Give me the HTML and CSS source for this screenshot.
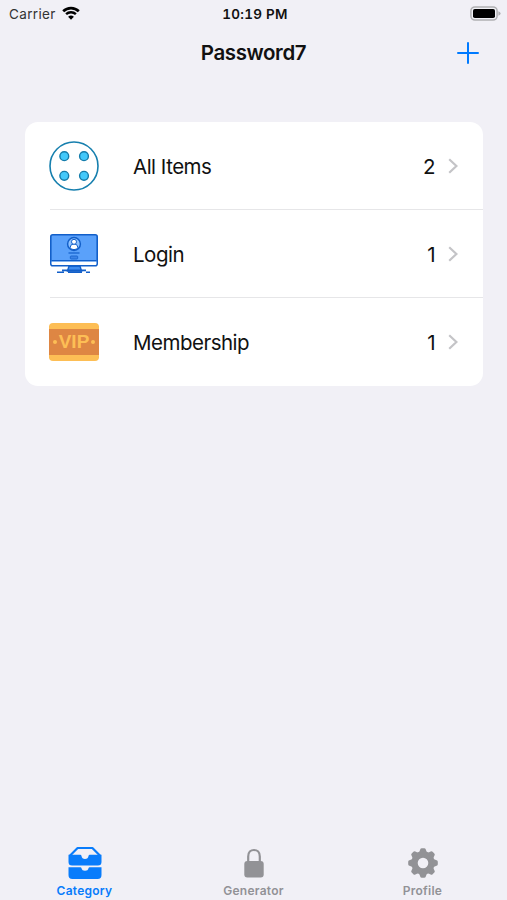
FILE: index.html
```html
<!DOCTYPE html>
<html lang="en">
<head>
    <meta charset="UTF-8">
    <meta name="viewport" content="width=device-width, initial-scale=1.0">
    <title>Password7</title>
    <link rel="stylesheet" href="styles.css">
</head>
<body>
    <div class="app">
        <div class="status-bar">
            <div class="carrier">
                <span>Carrier</span>
                <svg class="wifi" viewBox="0 0 18 14">
                    <path d="M1.2 5.2a11.2 11.2 0 0 1 15.6 0" fill="none" stroke="#000" stroke-width="2.7"/>
                    <path d="M4.1 8.2a7 7 0 0 1 9.8 0" fill="none" stroke="#000" stroke-width="2.4"/>
                    <path d="M6.1 10.8a4.2 4.2 0 0 1 5.8 0L9 13.7z"/>
                </svg>
            </div>
            <span class="time">10:19 PM</span>
            <svg class="battery" viewBox="0 0 31 15">
                <rect x="0.9" y="0.9" width="26.2" height="13.2" rx="4" fill="#f1f1f6" stroke="#b0b0b3" stroke-width="1.5"/>
                <rect x="3" y="3" width="22" height="9" rx="1.8"/>
                <path d="M28.4 5.2q2.2.8 2.2 2.3t-2.2 2.3z" fill="#b0b0b3"/>
            </svg>
        </div>

        <header class="navbar">
            <h1>Password7</h1>
            <button class="add" aria-label="Add">
                <svg viewBox="0 0 22 22"><path d="M11 1v20M1 11h20" stroke="#007aff" stroke-width="2" stroke-linecap="round"/></svg>
            </button>
        </header>

        <main class="list">
            <div class="row">
                <svg class="row-icon" viewBox="0 0 50 50">
                    <circle cx="25" cy="25" r="24" fill="#fff" stroke="#167fae" stroke-width="1.6"/>
                    <g fill="#43c8fa" stroke="#147cab" stroke-width="1.4">
                        <circle cx="15.3" cy="15.2" r="4.4"/>
                        <circle cx="35" cy="15.2" r="4.4"/>
                        <circle cx="15.3" cy="34.8" r="4.4"/>
                        <circle cx="35" cy="34.8" r="4.4"/>
                    </g>
                </svg>
                <div class="row-body">
                    <span class="name">All Items</span>
                    <span class="count">2</span>
                    <svg class="chevron" viewBox="0 0 10 16"><path d="M1.2 1.2 8.4 8l-7.2 6.8"/></svg>
                </div>
            </div>
            <div class="row">
                <svg class="row-icon" viewBox="0 0 50 50">
                    <path d="M20 37h11l1.5 5h-14z" fill="#408df0" stroke="#125fc9" stroke-width="1.4"/>
                    <rect x="1.8" y="5.8" width="46.4" height="31" rx="2" fill="#5aa1fa" stroke="#125fc9" stroke-width="1.6"/>
                    <path d="M2.6 32.4h44.8V35q0 1-1 1H3.6q-1 0-1-1z" fill="#fff"/>
                    <path d="M2.6 31.6h44.8" stroke="#125fc9" stroke-width="1.4"/>
                    <circle cx="25" cy="15" r="6.4" fill="#8fc2ff" stroke="#125fc9" stroke-width="1.5"/>
                    <path d="M21 18.8q.4-4 4-4t4 4q-1.6 1.8-4 1.8t-4-1.8z" fill="#fff" stroke="#125fc9"/>
                    <circle cx="25" cy="12.8" r="2.5" fill="#fff" stroke="#125fc9"/>
                    <path d="M19.5 24h11" stroke="#1c68d0" stroke-width="1.4"/>
                    <rect x="21.3" y="27" width="7.4" height="3" rx=".8" fill="#3b83e6" stroke="#1c68d0"/>
                    <path d="M13 41.4h24M8 43.2h7M19 43.2h14M37 43.2h4" stroke="#125fc9" stroke-width="1.6"/>
                </svg>
                <div class="row-body">
                    <span class="name">Login</span>
                    <span class="count">1</span>
                    <svg class="chevron" viewBox="0 0 10 16"><path d="M1.2 1.2 8.4 8l-7.2 6.8"/></svg>
                </div>
            </div>
            <div class="row">
                <div class="row-icon vip">
                    <i></i><b>VIP</b><i></i>
                </div>
                <div class="row-body">
                    <span class="name">Membership</span>
                    <span class="count">1</span>
                    <svg class="chevron" viewBox="0 0 10 16"><path d="M1.2 1.2 8.4 8l-7.2 6.8"/></svg>
                </div>
            </div>
        </main>

        <nav class="tabbar">
            <a class="tab active">
                <svg viewBox="0 0 36 36">
                    <path d="M2.6 12 10.6 4h14.8l8 8" fill="none" stroke="currentColor" stroke-width="2.2" stroke-linejoin="round"/>
                    <path d="M1.5 10.8h11.7q1.1 0 1.3 1.2.4 3 3.5 3t3.5-3q.2-1.2 1.3-1.2h11.7V18q0 3.6-3.6 3.6H5.1q-3.6 0-3.6-3.6z"/>
                    <path d="M1.5 23.2h11.8q1 0 1.2 1.1.5 2.5 3.5 2.5t3.5-2.5q.2-1.1 1.2-1.1h11.8V31q0 4-3.9 4H5.4q-3.9 0-3.9-4z"/>
                </svg>
                <span>Category</span>
            </a>
            <a class="tab">
                <svg viewBox="0 0 36 36">
                    <path d="M12.2 19v-6.5C12.2 8.2 14.8 6 18 6s5.8 2.2 5.8 6.500V19" fill="none" stroke="currentColor" stroke-width="2.2"/>
                    <rect x="8.3" y="17" width="19.4" height="16.5" rx="3"/>
                </svg>
                <span>Generator</span>
            </a>
            <a class="tab">
                <svg viewBox="0 0 36 36">
                    <circle cx="18" cy="19" r="8.5" fill="none" stroke="currentColor" stroke-width="6.4"/>
                    <g>
                        <path id="tooth" d="M13.6 9.800 15.2 5.4q.4-1.200 1.600-1.200h2.400q1.200 0 1.600 1.200l1.600 4.400z"/>
                        <use href="#tooth" transform="rotate(45 18 19)"/>
                        <use href="#tooth" transform="rotate(90 18 19)"/>
                        <use href="#tooth" transform="rotate(135 18 19)"/>
                        <use href="#tooth" transform="rotate(180 18 19)"/>
                        <use href="#tooth" transform="rotate(225 18 19)"/>
                        <use href="#tooth" transform="rotate(270 18 19)"/>
                        <use href="#tooth" transform="rotate(315 18 19)"/>
                    </g>
                </svg>
                <span>Profile</span>
            </a>
        </nav>
    </div>
</body>
</html>
```
FILE: styles.css
```css
* {
    box-sizing: border-box;
}
body {
    margin: 0;
    background: #f1f0f6;
    font-family: Inter, "Liberation Sans", sans-serif;
    color: #111;
}
.app {
    display: flex;
    flex-direction: column;
    height: 900px;
}
.status-bar {
    display: grid;
    grid-template-columns: 1fr auto 1fr;
    align-items: center;
    height: 27px;
    padding: 0 6px 0 9px;
    font-size: 13.5px;
}
.carrier {
    display: flex;
    align-items: center;
    gap: 6px;
    color: #333;
    letter-spacing: 0.35px;
}
.wifi {
    width: 18px;
    height: 14px;
    margin-bottom: 2px;
}
.time {
    font-weight: 600;
    font-size: 13.5px;
    letter-spacing: 0.25px;
    font-variant-numeric: tabular-nums;
}
.battery {
    width: 31px;
    height: 15px;
    margin-bottom: 1px;
    justify-self: end;
}
.navbar {
    display: grid;
    grid-template-columns: 1fr auto 1fr;
    align-items: center;
    height: 50px;
    padding: 0 28px;
}
.navbar h1 {
    grid-column: 2;
    margin: 0;
    font-size: 20.5px;
    font-weight: 600;
    letter-spacing: -0.4px;
}
.add {
    justify-self: end;
    padding: 1px 0 0;
    border: none;
    background: none;
    cursor: pointer;
}
.add svg {
    display: block;
    width: 22px;
    height: 22px;
}
.list {
    margin: 45px 24px 0 25px;
    background: #fff;
    border-radius: 13px;
}
.row {
    display: flex;
    align-items: center;
    height: 88px;
    padding-left: 24px;
}
.row-icon {
    flex: none;
    width: 50px;
    height: 50px;
}
.row-body {
    display: flex;
    flex: 1;
    align-items: center;
    height: 88px;
    padding: 0 25px 0 34px;
    font-size: 20.5px;
    letter-spacing: -0.5px;
}
.row:not(:last-child) {
    background: linear-gradient(#e6e6e8, #e6e6e8) 25px 100% / 100% 1px no-repeat;
}
.name {
    flex: 1;
}
.chevron {
    width: 10px;
    height: 16px;
    margin-left: 13px;
    fill: none;
    stroke: #c4c4c7;
    stroke-width: 2.2;
}
.vip {
    display: flex;
    align-items: center;
    justify-content: center;
    gap: 2px;
    height: 38px;
    border: solid #fdbe55;
    border-width: 6px 0;
    border-radius: 4px;
    background: #de8643;
    color: #fdbe55;
    font-size: 19px;
}
.vip b {
    font-family: "Liberation Sans", sans-serif;
}
.vip i {
    width: 4px;
    height: 4px;
    border-radius: 50%;
    background: #fdbe55;
}
.tabbar {
    display: grid;
    grid-template-columns: repeat(3, 1fr);
    height: 56px;
    margin-top: auto;
}
.tab {
    display: flex;
    flex-direction: column;
    align-items: center;
    color: #929296;
    font-size: 12px;
    font-weight: 600;
    letter-spacing: 0.25px;
}
.tab svg {
    width: 36px;
    height: 36px;
    fill: currentColor;
}
.tab span {
    margin-top: 3px;
    line-height: 15px;
}
.active {
    color: #087cfb;
}
```
